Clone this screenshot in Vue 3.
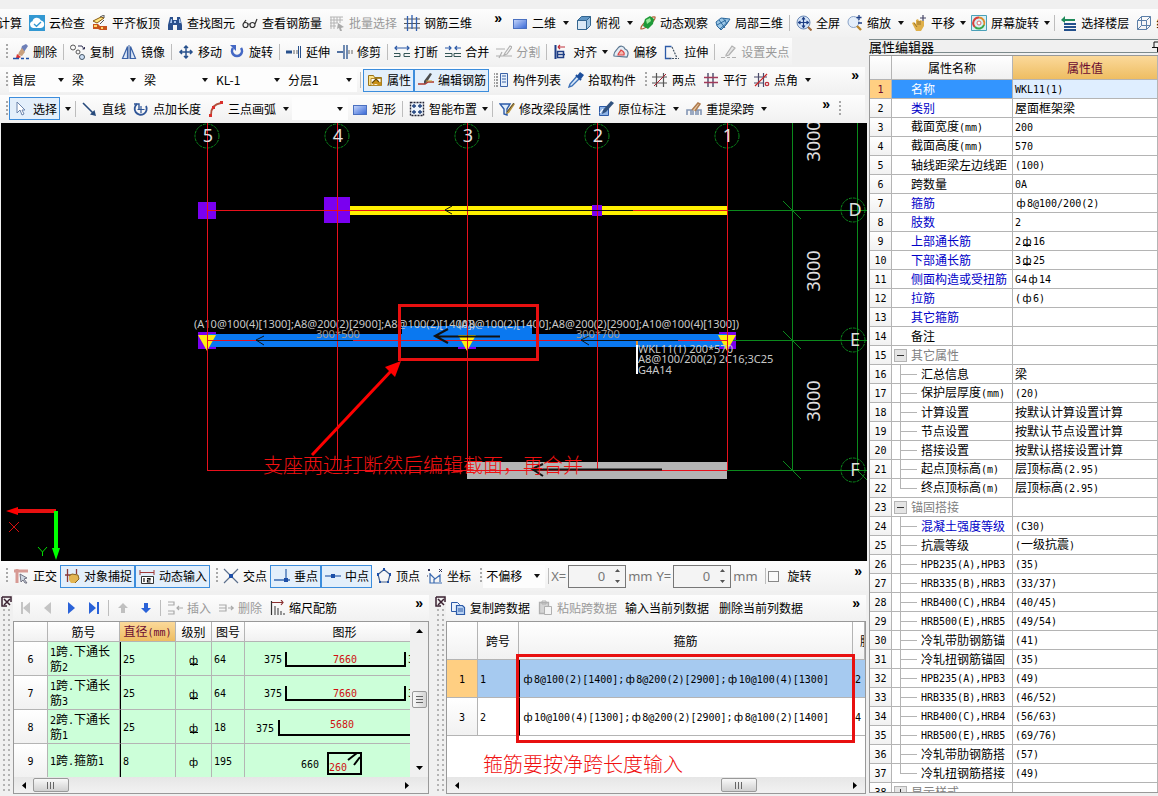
<script setup>
import { h } from 'vue'

const P = (d, s = '#2f5597', w = 1, f = 'none') => `<path d="${d}" stroke="${s}" stroke-width="${w}" fill="${f}"/>`
const F = (d, f = '#2f5597') => `<path d="${d}" fill="${f}"/>`
const dots = (s = '#c0303a') => `<circle cx="13" cy="12" r="1.7" fill="none" stroke="${s}" stroke-width="1.3"/>`

const icons = {
  cloud: F('M0 0h16v16H0z', '#3398d2') + F('M4 13a3.5 3.5 0 0 1-.5-6.8A4.5 4.5 0 0 1 12 5.5a3.8 3.8 0 0 1 0 7.5z', '#fff') + P('M5 9l2.5 2.3L12 7', '#3398d2', 1.3),
  slab: P('M1 6l8-4 3 1-7 5z', '#8a5a10', 1, '#ffe680') + F('M1 9h5l2 2h7v4H8l-2-1H1z', '#c8541c') + F('M2 10h3v2H2zM9 12h2v2H9z', '#ffd76a') + P('M8 2l4-2v3M12 5l-4 4', '#555'),
  binoc: F('M3 2h3v3h4V2h3l2 8v5h-5v-5H6v5H1v-5z', '#2a4f8c') + F('M4 4h1v4H3zM12 4h1l1 4h-2zM7 6h2v2H7z', '#a9c6ee'),
  glasses: P('M1 10a2.5 2.5 0 1 0 5 0a2.5 2.5 0 1 0-5 0M8 10a2.5 2.5 0 1 0 5 0a2.5 2.5 0 1 0-5 0M6 9h2M1 9l3-4M13 9l2-5', '#333', 1.2),
  batch: P('M1 2h13M1 5h13M1 8h8M1 11h6M2 2v12M5 2v12M8 2v6M11 2v6', '#b4b4b4') + F('M9 8l6 4-3 1 1 3-2 0-1-3-2 1z', '#aaa'),
  rebar3d: P('M0 4h16M0 8.5h16M0 13h16', '#555') + P('M3.5 1v15M8 0v14M12.5 2v14', '#2f5fb0', 1.3),
  rect2d: `<defs><linearGradient id="gr" x2="1" y2="1"><stop stop-color="#c9d8fb"/><stop offset="1" stop-color="#3566d6"/></linearGradient></defs><rect x="1.5" y="4.5" width="13" height="9" fill="url(#gr)" stroke="#4a70c0"/>`,
  cube: P('M1.5 5.5h9v9h-9z', '#33658f', 1, '#dbe9f5') + P('M1.5 5.5l4-4h9l-4 4z', '#33658f', 1, '#5f95c4') + P('M10.5 5.5l4-4v9l-4 4z', '#33658f', 1, '#9dc2e0'),
  orbit: P('M1 14C0 11 10 1 15 2C16 5 6 14 1 14z', '#b05a30', 1.2) + F('M5 4l5-3 4 3-1 5-5 5-5-3z', '#1f9a38') + F('M6 5l4-2 1 3-4 3z', '#9be89b'),
  local3d: P('M1 7l5-4 9 1-4 6-5 5-4-4z', '#2e6a9e', 1, '#9cc7e6') + P('M4 5l6 8M8 3l4 6M2 10l9-5M5 14l9-8', '#2e6a9e'),
  full: `<circle cx="7.5" cy="7.5" r="6.5" fill="#d5e4f7" stroke="#6b89b5"/>` + P('M7.5 3v9M3 7.5h9M6 4.5l1.5-2 1.5 2M6 10.5l1.5 2 1.5-2M4.5 6l-2 1.5 2 1.5M10.5 6l2 1.5-2 1.5', '#1e3f86', 1.2) + P('M12 12l3.5 3.5', '#a06a3c', 2),
  zoom: `<circle cx="6.5" cy="7" r="5.5" fill="#e4eefa" stroke="#8aa3c7"/>` + P('M10 11l4 4', '#b8862e', 2.4) + P('M12 0v5M9.5 2.5h5M11 8h4', '#1e3f86', 1.3),
  pan: F('M1 8l2-1 2 2V5l2-1 1 2 2-1 1 1 2 0v5l-3 5H5z', '#dfb04a') + P('M3 8l3 4M7 6v4M9 6v4', '#8a6420', 0.8) + P('M12 0v6M9 3h6', '#446', 1.2),
  rot: P('M.5.5h15v15h-15z', '#4aa0b8', 1, '#d7f0f4') + P('M4 12A5.5 5.5 0 0 1 8 2.5', '#d7403a', 2) + P('M8 2.5A5.5 5.5 0 0 1 13 10', '#e08a2c', 2) + P('M13 10A5.5 5.5 0 0 1 4 12', '#3aa648', 2) + `<circle cx="8" cy="8" r="2" fill="#fff" stroke="#d66"/>`,
  floors: F('M0 5l4-4v3h10v2H4v2z', '#1e8a5a') + F('M3 8h12v2H3zM3 11h12v2H3zM3 14h12v2H3z', '#23508c'),
  wire: P('M1.5 5.5h9v9h-9zM5.5 1.5h9v9h-9zM1.5 5.5l4-4M10.5 5.5l4-4M10.5 14.5l4-4M1.5 14.5l4-4', '#5c7fa8'),
  erase: F('M9 2l4-2 2 2-4 6-4 1z', '#6d7fb8') + F('M6 8l3-4 3 4-3 4-4-1z', '#c9a07c') + F('M4 10l4 3-2 1H3z', '#d33') + P('M0 14.5h6M8 14.5h3M13 14.5h3', '#1f4fa8', 1.4),
  copy: `<circle cx="3" cy="3.5" r="2.5" fill="none" stroke="#555"/><circle cx="8" cy="8" r="2" fill="none" stroke="#555"/><circle cx="12" cy="13" r="2.5" fill="#cfe0f5" stroke="#456"/>` + P('M8 2h4l2 3M12.5 5H14.5V3', '#335'),
  mirror: P('M1.5 14.5l5-12v12zM14.5 14.5l-5-12v12z', '#3b62a6', 1.2, '#dde8f7') + P('M8 1v14', '#3b62a6', 1),
  move: P('M8 2v12M2 8h12M6 4l2-2 2 2M6 12l2 2 2-2M4 6L2 8l2 2M12 6l2 2-2 2', '#27508c', 1.5),
  rotate: P('M4 4A5 5 0 1 0 12 4', '#4468c4', 2.6) + F('M1 1h6v6z', '#4468c4'),
  extend: P('M0 8h6', '#27508c', 3) + P('M7 7h5M7 9h5', '#666', 1).replace('/>', ' stroke-dasharray="2 1"/>') + P('M12.5 2v12M14.5 2v12', '#27508c', 1),
  trim: P('M0 8h6', '#27508c', 1.6) + P('M7 1v14M10 1v14', '#27508c', 1.3) + P('M11 7h2M14 7h2M11 9h2M14 9h2', '#666', 1),
  break: P('M1 4h14M3 2L1 4l2 2M13 2l2 2-2 2', '#2d5ba8', 1.2) + P('M0 9.5h6v3H0M16 9.5h-6v3h6', '#355', 1),
  merge: P('M0 4h6M10 4h6M4 2l2 2-2 2M12 2l-2 2 2 2', '#2d5ba8', 1.2) + P('M0 9.5h7v3H0M16 9.5H9v3h7', '#355', 1),
  split: P('M0 5h9M0 12h16M3 14l3-6M9 9l5-7 2 1-5 7-3 1z', '#b0b0b0', 1.2),
  align: P('M2.5 1v14', '#1f3f86', 2) + P('M5 3h7M5 3l2-2M5 3l2 2', '#c0303a', 1.2) + P('M4.5 7.5h6v6h-6zM4 10.5h8', '#1f3f86', 1.5),
  offset: P('M1 12C0 8 4 6 5 4C7 1 11 2 12 5C15 6 16 9 14 13z', '#5b7690', 1.2, '#e4edf5') + P('M5 11C5 9 7 8 8 6C10 7 12 8 11 11z', '#d44', 1.2, '#f5b9b0'),
  stretch: P('M7.5 2.5h-6v12h6', '#2d5ba8', 1.3) + P('M8 3l5 11M5 14.5h10', '#456', 1.2).replace('/>', ' stroke-dasharray="2 1"/>'),
  clamp: P('M0 13.5h4M6 13.5h3M11 13.5h4M5 11l6-9 3 2-6 7-3 1z', '#b0b0b0', 1.2, '#e6e6e6'),
  prop: P('M1.5 3.5h5l1 2h7v8h-13z', '#9a7418', 1, '#ffe48a') + F('M4 6h10v8H4z', '#fff') + P('M4 6.5h10v7H4z', '#b08a30') + F('M5 11l4-4 3 3 2 0v3h-3l-2-1-3 1z', '#c89018') + P('M5 11l4-4 3 3', '#6a4c08', 1.2),
  editbar: P('M0 12h7l3-2h6', '#b0382c', 1.5) + F('M6 9l6-8 2 1-5 8-3 2z', '#4c4c4c') + P('M8 9h6', '#c8a030', 1),
  list: P('M1 2h1M3 2h2M1 5h1M3 5h2M1 8h1M3 8h2M1 11h1M3 11h2M1 14h1M3 14h2', '#444', 1) + P('M7.5 1.5h7v13h-7z', '#3b62a6', 1, '#e6effa') + P('M9 4h4M9 7h4M9 10h4', '#3b62a6'),
  pick: F('M9 4l3-4 4 3-3 4z', '#1d4f9c') + P('M9 4l-7 8-1 3 3-1 7-7', '#3b6fb6', 1.4, '#d9e8f8') + P('M8 3l5 5', '#1d4f9c', 2),
  twopt: P('M4.5 1v14M11.5 1v14M0 5h15M0 11h15', '#555', 1.2) + P('M2 14L14 2', '#a23', 1),
  parallel: P('M5 1v14M10 1v14', '#4a4a6a', 1.4) + P('M1 5.5h14M1 10.5h14', '#a23a5a', 1.4),
  ptangle: P('M4.5 1v14M9.5 1v14M0 5h13M0 11h10', '#4a4a6a', 1.2) + P('M1 14L13 2', '#c22', 1.2) + dots(),
  select: P('M4 1l0 11 3-3 2 5 2-1-2-4 3 0z', '#6a84ac', 1, '#fff'),
  line: P('M1 2l11 11', '#274a7c', 1.6) + F('M14 15L8 13.5 12.5 9z', '#274a7c'),
  ptlen: P('M4 3A6 6 0 1 0 13 5', '#2f5597', 1.8) + P('M1 3h5v5', '#2f5597', 1.4) + P('M8 5v7M4.5 8.5h7', '#2f5597', 1.2),
  arc: P('M3 14C3 8 6 3 13 2', '#b0503c', 1.8) + F('M1 13h3v3H1zM4 5h3v3H4zM12 0h3v3h-3z', '#d9302c'),
  smart: P('M1.5 1.5h13v13h-13z', '#223', 1.4, '#eef4fb').replace('/>', ' stroke-dasharray="2 1"/>') + P('M5 3v4M3 5h4M11 3v4M9 5h4M5 9v4M3 11h4M11 9v4M9 11h4', '#1c3f7c', 1.3),
  modify: P('M1 3h10l-3 5v6l-3-1V8z', '#2d5ba8', 1.4, '#dcebfa') + F('M8 10l6-8 2 1-6 9-3 1z', '#b9943c') + P('M8 11l7-9', '#444', 0.9),
  annot: P('M1.5 5.5h9v9h-9z', '#2d5ba8', 1, '#8fb4e6') + F('M5 9l8-9 3 2-8 9-4 2z', '#31527f') + P('M2 12l3-4', '#fff', 1.2),
  respan: P('M1 14V9h4v5M7 14V9h3v5M12 14V9h3v5M1 9h14', '#8496b4', 1.6) + P('M6 9l6-7 2 1-5 7', '#b07c50', 1.5, '#e8cda8'),
  ortho: P('M1 3h14M4 1v14', '#d79a94', 3) + P('M7 6l7 4-3 1 3 4-2 0-2-3-2 2z', '#667', 0.9, '#cfd8e4'),
  osnap: P('M3.5 1v13M1 7h6M12.5 1v5', '#8a3a3a', 1.3) + F('M5 8l3-2 6 1 1 4-4 4H7l-2-3z', '#e3b552') + P('M5 8l3-2 6 1 1 4-4 4', '#8a6420'),
  dyn: P('M1 2v5M15 2v5M1 4.5h14', '#a03a3a', 1) + P('M2.5 8.5h12v7h-12z', '#333', 1, '#fff') + P('M5 10v4M8 10.5h3v1.5H8.5v2H11.5', '#111', 1.2),
  inter: P('M1 1l14 14M15 1L1 15', '#5c6f8c', 1.2) + F('M6 6h4v4H6z', '#1d4fa8'),
  perp: P('M0 12h16M12 1v11', '#3a6ab0', 1.3) + F('M10 10h4v4h-4z', '#1d4fa8'),
  mid: P('M0 8h16', '#3a6ab0', 1.3) + F('M6 6h4v4H6z', '#1d4fa8'),
  vertex: P('M8 1.5L14 6.5 12 14H4L2 6.5z', '#44618c', 1.2) + F('M7 0h2v3H7zM13 5h2v3h-2zM1 5h2v3H1zM3 13h2v2H3zM11 13h2v2h-2z', '#1d4fa8'),
  coord: P('M3 5v10h12M3 6l5 5 5-4v7M7 15v-4', '#3a6ab0', 1.2) + P('M1 1l2 2M3 1L1 3M12 1l3 3M15 1l-3 3M0 8h1', '#335', 1),
  first: F('M4 2h2v12H4zM13 2v12L6 8z', '#c4c4c4'),
  prev: F('M11 2v12L4 8z', '#c4c4c4'),
  next: F('M5 2v12l7-6z', '#2a62d8'),
  last: F('M3 2v12l7-6zM11 2h2v12h-2z', '#2a62d8'),
  up: F('M8 3l5 5h-3v5H6V8H3z', '#c0c0c0'),
  down: F('M8 13l5-5h-3V3H6v5H3z', '#2a62d8'),
  ins: P('M1 2h6v3H1M1 11h6v3H1M10 8h6M12 6l-2 2 2 2', '#aaa', 1.2),
  del: P('M1 5h7v6H1M1 8h7M10 8h6M13 6l2 2-2 2', '#aaa', 1.2),
  scale: P('M2.5 1v14', '#333', 1.2) + P('M3 2.5h11M12 0l2 2.5-2 2.500', '#8a3030', 1.2) + P('M6 15V6M9 15V8M12 15v-4M15 15v-2', '#555', 1.2),
  copydata: P('M1.5 2.5h6l2 2v7h-8z', '#2d5ba8', 1, '#eaf2fc') + P('M6.5 5.5h6l2 2v7h-8z', '#2d5ba8', 1.2, '#b9d2f2') + P('M8 9h5M8 11h5', '#2d5ba8'),
  paste: P('M2.5 2.5h9v11h-9z', '#b0b0b0', 1.3, '#d4d4d4') + P('M5 1h4v3H5z', '#b0b0b0', 1) + P('M7.5 6.5h7v8h-7z', '#b0b0b0', 1, '#f4f4f4')
}

const svg = (name) => h('svg', { class: 'ico', viewBox: '0 0 16 16', width: 16, height: 16, 'aria-hidden': true, innerHTML: icons[name] })
const caret = () => h('svg', { class: 'caret', viewBox: '0 0 12 6', width: 12, height: 6, 'aria-hidden': true, innerHTML: '<path d="M3 1h6L6 5z" fill="#111"/>' })

const Tools = (props) => props.items.map((it) => {
  if (it === '|') return h('i', { class: 'sep' })
  if (it === ':') return h('i', { class: 'grip' })
  if (it === '>>') return h('button', { class: 'more', type: 'button' }, '»')
  if (it.sel !== undefined) {
    return h('label', { class: ['combo', it.size] }, [
      h('select', { 'aria-label': it.name }, [h('option', it.sel)]),
      caret()
    ])
  }
  const cls = ['tb', { on: it.on, solo: it.solo, tight: it.tight, plain: !it.i && it.l && !it.solo }]
  return h('button', { class: cls, type: 'button', disabled: it.off, 'aria-label': it.l || it.name }, [
    it.i ? svg(it.i) : null,
    it.l ? h('span', it.l) : null,
    it.a && !it.on ? caret() : null
  ])
})
Tools.props = ['items']

const Mix = (props) => props.t.split(/([\x20-\x7e]+|[ф⏀])/).filter(Boolean).map((s) => {
  if (s === 'ф') return h('span', { class: 'phi' }, 'ф')
  if (s === '⏀') return h('span', { class: 'phi three' }, 'ф')
  return /^[\x20-\x7e]/.test(s) ? h('span', { class: 'mono' }, s) : s
})
Mix.props = ['t']

const b = (i, l, o = {}) => ({ i, l, ...o })
const arrow = { a: true }
const tight = { a: true, tight: true }
const off = { off: true }
const on = { on: true }

const top1 = [b('', '计算', { solo: true }), b('cloud', '云检查'), b('slab', '平齐板顶'), b('binoc', '查找图元'), b('glasses', '查看钢筋量'), b('batch', '批量选择', off), b('rebar3d', '钢筋三维'), '>>']
const top2 = [b('rect2d', '二维', arrow), b('cube', '俯视', arrow), b('orbit', '动态观察'), b('local3d', '局部三维'), '|', b('full', '全屏'), b('zoom', '缩放', arrow), b('pan', '平移', tight), b('rot', '屏幕旋转', tight), '|', b('floors', '选择楼层'), b('wire', '线框')]
const editBar = [':', b('erase', '删除'), '|', b('copy', '复制'), b('mirror', '镜像'), '|', b('move', '移动'), b('rotate', '旋转'), '|', b('extend', '延伸'), b('trim', '修剪'), '|', b('break', '打断'), b('merge', '合并'), b('split', '分割', off), '|', b('align', '对齐', tight), b('offset', '偏移'), b('stretch', '拉伸'), '|', b('clamp', '设置夹点', off)]
const memberBar = [':', { sel: '首层', name: '楼层', size: 'small' }, { sel: '梁', name: '构件类别' }, { sel: '梁', name: '构件类型' }, { sel: 'KL-1', name: '构件' }, { sel: '分层1', name: '分层' }, '|', b('prop', '属性', on), b('editbar', '编辑钢筋', on), b('list', '构件列表'), b('pick', '拾取构件'), ':', b('twopt', '两点'), b('parallel', '平行'), b('ptangle', '点角', arrow), '>>']
const drawBar = [':', b('select', '选择', on), { name: '选择方式', a: true }, '|', b('line', '直线'), b('ptlen', '点加长度'), b('arc', '三点画弧', arrow), { sel: '', name: '画弧方式', size: 'mid' }, b('rect2d', '矩形'), '|', b('smart', '智能布置', tight), '|', b('modify', '修改梁段属性'), b('annot', '原位标注', arrow), b('respan', '重提梁跨', arrow), '>>', ':']
const snapBar = [':', b('ortho', '正交'), b('osnap', '对象捕捉', on), b('dyn', '动态输入', on), ':', b('inter', '交点'), b('perp', '垂点', on), b('mid', '中点', on), b('vertex', '顶点'), b('coord', '坐标'), ':', { sel: '不偏移', name: '偏移方式', size: 'wide' }, '|']
const nav = (i, name, o = {}) => ({ i, name, ...o })
const barBar = [nav('first', '首行', off), nav('prev', '上一行', off), nav('next', '下一行'), nav('last', '末行'), '|', nav('up', '上移', off), nav('down', '下移'), '|', b('ins', '插入', off), b('del', '删除', off), b('scale', '缩尺配筋'), '>>']
const spanBar = [b('copydata', '复制跨数据'), b('paste', '粘贴跨数据', off), b('', '输入当前列数据'), b('', '删除当前列数据'), '>>']

// [name, value, kind]: s = selected, b = blue, g = group, c = child, e = last child, B = blue child
const props = [
  ['名称', 'WKL11(1)', 's'], ['类别', '屋面框架梁', 'b'], ['截面宽度(mm)', '200'], ['截面高度(mm)', '570'], ['轴线距梁左边线距', '(100)'],
  ['跨数量', '0A'], ['箍筋', 'ф8@100/200(2)', 'b'], ['肢数', '2', 'b'], ['上部通长筋', '2⏀16', 'b'], ['下部通长筋', '3⏀25', 'b'],
  ['侧面构造或受扭筋', 'G4ф14', 'b'], ['拉筋', '(ф6)', 'b'], ['其它箍筋', '', 'b'], ['备注', ''], ['其它属性', '', 'g'],
  ['汇总信息', '梁', 'c'], ['保护层厚度(mm)', '(20)', 'c'], ['计算设置', '按默认计算设置计算', 'c'], ['节点设置', '按默认节点设置计算', 'c'], ['搭接设置', '按默认搭接设置计算', 'c'],
  ['起点顶标高(m)', '层顶标高(2.95)', 'c'], ['终点顶标高(m)', '层顶标高(2.95)', 'e'], ['锚固搭接', '', 'g'], ['混凝土强度等级', '(C30)', 'B'], ['抗震等级', '(一级抗震)', 'c'],
  ['HPB235(A),HPB3', '(35)', 'c'], ['HRB335(B),HRB3', '(33/37)', 'c'], ['HRB400(C),HRB4', '(40/45)', 'c'], ['HRB500(E),HRB5', '(49/54)', 'c'], ['冷轧带肋钢筋锚', '(41)', 'c'],
  ['冷轧扭钢筋锚固', '(35)', 'c'], ['HPB235(A),HPB3', '(49)', 'c'], ['HRB335(B),HRB3', '(46/52)', 'c'], ['HRB400(C),HRB4', '(56/63)', 'c'], ['HRB500(E),HRB5', '(69/76)', 'c'],
  ['冷轧带肋钢筋搭', '(57)', 'c'], ['冷轧扭钢筋搭接', '(49)', 'e'], ['显示样式', '', 'g']
]
const kinds = { s: 'sel', b: 'blue', g: 'group', c: 'child', e: 'child end', B: 'child blue' }

const bars = [
  { n: 6, name: '1跨.下通长筋2', d: 25, g: '⏀', no: 64, path: 'M41 9v14h119V9', left: '375', lx: 19, ly: 20, mid: '7660', mx: 88, my: 20, tail: '375' },
  { n: 7, name: '1跨.下通长筋3', d: 25, g: '⏀', no: 64, path: 'M41 9v14h119V9', left: '375', lx: 19, ly: 20, mid: '7660', mx: 88, my: 20, tail: '375' },
  { n: 8, name: '2跨.下通长筋1', d: 25, g: '⏀', no: 18, path: 'M34 9v15h136', left: '375', lx: 11, ly: 21, mid: '5680', mx: 85, my: 17 },
  { n: 9, name: '1跨.箍筋1', d: 8, g: 'ф', no: 195, path: 'M83 8h33v21h-33zM103 15l9-7M109 20l6-8', left: '660', lx: 56, ly: 23, mid: '260', mx: 84, my: 26 }
]
const spans = [
  { n: 1, k: 1, v: 'ф8@100(2)[1400];ф8@200(2)[2900];ф10@100(4)[1300]', z: 2, cur: true },
  { n: 3, k: 2, v: 'ф10@100(4)[1300];ф8@200(2)[2900];ф8@100(2)[1400]', z: 4 }
]

const cols = [[207, 5], [337, 4], [467, 3], [597, 2], [727, 1]]
const rowsAxis = [[210, 'D'], [340, 'E'], [470, 'F']]
const columns = [[198, 202, 18, 17], [324, 197, 26, 26], [592, 205, 10, 11], [198, 332, 18, 17], [458, 332, 18, 17], [719, 332, 17, 17]]
</script>

<template>
  <div class="ui">
    <div class="topbar">
      <div class="bar first"><Tools :items="top1" /></div>
      <div class="bar second"><Tools :items="top2" /></div>
    </div>
    <div class="work">
      <main class="left">
        <div class="row"><div class="bar"><Tools :items="editBar" /></div></div>
        <div class="row"><div class="bar grow"><Tools :items="memberBar" /></div></div>
        <div class="row"><div class="bar grow draw"><Tools :items="drawBar" /></div></div>

        <svg class="canvas" role="img" aria-label="梁平面图">
          <g transform="translate(-1,-123)">
            <rect x="350" y="206" width="377" height="9" fill="#fff000" />
            <rect x="467" y="462" width="260" height="17" fill="#b4b4b4" />
            <rect v-for="(c, i) in columns" :key="i" :x="c[0]" :y="c[1]" :width="c[2]" :height="c[3]" fill="#7a00f0" />
            <path d="M207 334h195v-8h130v8h195v13H207z" fill="#0a78f0" />
            <rect x="727" y="332" width="9" height="17" fill="#7a00f0" />
            <rect x="198" y="332" width="9" height="17" fill="#7a00f0" />
            <g class="axis">
              <template v-for="r in rowsAxis" :key="r[1]">
                <path :d="`M727 ${r[0]}.5h140M783 ${r[0] - 9}l18 18`" />
                <circle :cx="853" :cy="r[0]" r="12" />
              </template>
              <path d="M792.5 123v347M857.5 123v347M857 470l10 10" />
              <circle v-for="c in cols" :key="c[1]" :cx="c[0]" cy="136" r="12" />
            </g>
            <path v-for="x in [207, 467, 727]" :key="x" :d="`M${x - 9} 335h18l-9 16z`" fill="#ffee10" />
            <g class="cad small">
              <text x="194" y="328">(A10@100(4)[1300];A8@200(2)[2900];A8@100(2)[1400])</text>
              <text x="739" y="328" text-anchor="end">(A8@100(2)[1400];A8@200(2)[2900];A10@100(4)[1300])</text>
              <text x="316" y="338" class="dim">300*500</text>
              <text x="576" y="338" class="dim">300*700</text>
              <text x="638" y="353">WKL11(1) 200*570</text>
              <text x="638" y="363">A8@100/200(2) 2C16;3C25</text>
              <text x="638" y="374">G4A14</text>
            </g>
            <path d="M637 345v29" stroke="#fff" stroke-width="2" />
            <path d="M637 341v4" stroke="#e09030" stroke-width="2" />
            <g class="red">
              <rect v-for="c in cols" :key="c[1]" :x="c[0]" y="123" width="1" height="347" />
              <rect v-for="r in rowsAxis" :key="r[1]" x="207" :y="r[0]" width="520" height="1" />
            </g>
            <g class="cad big">
              <text v-for="c in cols" :key="c[1]" :x="c[0] + 1" y="142" text-anchor="middle">{{ c[1] }}</text>
              <text v-for="r in rowsAxis" :key="r[1]" x="855" :y="r[0] + 6" text-anchor="middle">{{ r[1] }}</text>
              <text v-for="y in [141, 271, 401]" :key="y" :transform="`translate(820,${y}) rotate(-90)`" text-anchor="middle">3000</text>
            </g>
            <path d="M445 210.5h188M452 206l-7 4 7 4M256 340.5h97M264 336l-8 4 8 5M581 340.5h97M589 336l-8 4 8 5" stroke="#111" fill="none" />
            <path d="M435 336.5h65M448 329l-13 7 13 7M532 469.5h130M543 464l-11 5 11 7" stroke="#111" stroke-width="2" fill="none" />
            <rect x="399.5" y="305.5" width="138" height="54" fill="none" stroke="#e81010" stroke-width="3" />
            <path d="M312 455l80-85" stroke="#f00" stroke-width="3" />
            <path d="M401 361l-6 16-10-10z" fill="#f00" />
            <text x="263" y="473" class="note">支座两边打断然后编辑截面，再合并</text>
            <path d="M56 511H18" stroke="#e81010" stroke-width="4" />
            <path d="M6 511l12-4v8z" fill="#f00" />
            <path d="M56 511v40" stroke="#0f0" stroke-width="4" />
            <path d="M56 560l-4-12h8z" fill="#0f0" />
            <path d="M9 522l10 10M19 522l-10 10" stroke="#d01010" />
            <path d="M38 547l4.5 5 4.5-5M42.5 552v4" stroke="#0d0" fill="none" />
          </g>
        </svg>

        <div class="bar snap">
          <Tools :items="snapBar" />
          <label class="num"><span>X=</span><span class="spin"><input type="text" value="0" disabled /><svg width="9" height="18" viewBox="0 0 9 18"><path d="M2 5l2.5-3L7 5zM2 13l2.5 3L7 13z" fill="#555" /></svg></span><span>mm</span></label>
          <label class="num"><span>Y=</span><span class="spin"><input type="text" value="0" disabled /><svg width="9" height="18" viewBox="0 0 9 18"><path d="M2 5l2.5-3L7 5zM2 13l2.5 3L7 13z" fill="#555" /></svg></span><span>mm</span></label>
          <Tools :items="['|']" />
          <label class="chk"><input type="checkbox" /><span>旋转</span></label>
          <Tools :items="['>>']" />
        </div>

        <div class="docks">
          <section class="dock wide">
            <div class="handle"><button type="button" class="shut" aria-label="关闭"><svg width="11" height="11" viewBox="0 0 11 11"><path d="M1 1h9v5M1 1v9h5" stroke="#3a2030" fill="none" stroke-width="1.5" /><path d="M3 3l6 6M9 3L3 9" stroke="#3a2030" stroke-width="1.5" /></svg></button></div>
            <div class="body">
              <div class="bar"><Tools :items="barBar" /></div>
              <div class="sheet">
                <div class="view">
                  <table class="bars">
                    <colgroup><col class="c34" /><col class="c72" /><col class="c56" /><col class="c36" /><col class="c33" /><col /></colgroup>
                    <thead><tr><th></th><th>筋号</th><th class="hot"><Mix t="直径(mm)" /></th><th>级别</th><th>图号</th><th class="pic">图形</th></tr></thead>
                    <tbody>
                      <tr v-for="r in bars" :key="r.n">
                        <th><Mix :t="String(r.n)" /></th>
                        <td class="nm"><Mix :t="r.name" /></td>
                        <td class="cur"><Mix :t="String(r.d)" /></td>
                        <td class="mid"><Mix :t="r.g" /></td>
                        <td><Mix :t="String(r.no)" /></td>
                        <td class="shape">
                          <svg width="100%" height="32">
                            <path :d="r.path" fill="none" stroke="#000" stroke-width="2" />
                            <text :x="r.lx" :y="r.ly">{{ r.left }}</text>
                            <text :x="r.mx" :y="r.my" class="len">{{ r.mid }}</text>
                            <text v-if="r.tail" x="163" :y="r.ly">{{ r.tail }}</text>
                          </svg>
                        </td>
                      </tr>
                    </tbody>
                  </table>
                </div>
                <div class="vscroll">
                  <button type="button" aria-label="向上"><svg width="7" height="4"><path d="M0 4l3.5-4L7 4z" /></svg></button>
                  <i class="thumb v"></i>
                  <button type="button" aria-label="向下"><svg width="7" height="4"><path d="M0 0l3.5 4L7 0z" /></svg></button>
                </div>
                <div class="hscroll">
                  <button type="button" aria-label="向左"><svg width="4" height="7"><path d="M4 0L0 3.5 4 7z" /></svg></button>
                  <i class="thumb h"></i><span class="fill"></span>
                  <button type="button" aria-label="向右"><svg width="4" height="7"><path d="M0 0l4 3.5L0 7z" /></svg></button>
                  <i class="corner"></i>
                </div>
              </div>
            </div>
          </section>
          <section class="dock">
            <div class="handle"><button type="button" class="shut" aria-label="关闭"><svg width="11" height="11" viewBox="0 0 11 11"><path d="M1 1h9v5M1 1v9h5" stroke="#3a2030" fill="none" stroke-width="1.5" /><path d="M3 3l6 6M9 3L3 9" stroke="#3a2030" stroke-width="1.5" /></svg></button></div>
            <div class="body">
              <div class="bar"><Tools :items="spanBar" /></div>
              <div class="sheet single">
                <div class="view white">
                  <table class="spans">
                    <colgroup><col class="c31" /><col class="c41" /><col /><col class="c12" /></colgroup>
                    <thead><tr><th></th><th>跨号</th><th>箍筋</th><th class="cut">肢数</th></tr></thead>
                    <tbody>
                      <tr v-for="r in spans" :key="r.n" :class="{ cur: r.cur }">
                        <th><Mix :t="String(r.n)" /></th>
                        <td><Mix :t="String(r.k)" /></td>
                        <td class="edge"><Mix :t="r.v" /></td>
                        <td><Mix :t="String(r.z)" /></td>
                      </tr>
                    </tbody>
                  </table>
                  <div class="frame"></div>
                  <p class="remark">箍筋要按净跨长度输入</p>
                </div>
                <div class="hscroll">
                  <button type="button" aria-label="向左"><svg width="4" height="7"><path d="M4 0L0 3.5 4 7z" /></svg></button>
                  <span class="fill"></span><i class="thumb h"></i><span class="rest"></span>
                  <button type="button" aria-label="向右"><svg width="4" height="7"><path d="M0 0l4 3.5L0 7z" /></svg></button>
                </div>
              </div>
            </div>
          </section>
        </div>
      </main>

      <aside class="panel">
        <header><h2>属性编辑器</h2><svg width="6" height="12" viewBox="0 0 6 12"><path d="M6 2H2v5M0 7.5h6M5.5 7v5" stroke="#111" fill="none" /></svg></header>
        <div class="scroller">
          <table class="props">
            <colgroup><col class="c21" /><col class="c121" /><col /></colgroup>
            <thead><tr><th></th><th>属性名称</th><th class="hot">属性值</th></tr></thead>
            <tbody>
              <tr v-for="(p, i) in props" :key="i" :class="kinds[p[2]]">
                <th><Mix :t="String(i + 1)" /></th>
                <td class="name"><button v-if="p[2] === 'g'" type="button" class="fold" :class="{ plus: i === 37 }" :aria-label="p[0]"></button><Mix :t="p[0]" /></td>
                <td><Mix :t="p[1]" /></td>
              </tr>
            </tbody>
          </table>
        </div>
      </aside>
    </div>
  </div>
</template>

<style>
body { background: #f0f0f0; }
</style>

<style scoped>
.ui {
  height: 100vh;
  display: flex;
  flex-direction: column;
  overflow: hidden;
  box-sizing: border-box;
  padding-top: 9px;
  background: #f0f0f0;
  color: #000;
  font: 12px/14px "Noto Sans CJK SC", sans-serif;
}
.ui :deep(button), .ui :deep(select), .ui :deep(input) { font: inherit; color: inherit; }
.ui :deep(button) { border: 0; padding: 0; background: none; }
.topbar { display: flex; height: 28px; flex: none; }
.bar {
  display: flex;
  align-items: center;
  white-space: nowrap;
  background: linear-gradient(#fdfdfd, #f1f1f1);
}
.first { width: 508px; }
.second { flex: 1; min-width: 0; overflow: hidden; }
.bar :deep(.tb) {
  display: flex;
  align-items: center;
  flex: none;
  gap: 4px;
  height: 23px;
  box-sizing: border-box;
  padding: 0 3px 0 4px;
}
.bar :deep(.tb:has(.caret)) { padding-right: 0; }
.bar :deep(.tb.tight) { gap: 2px; }
.bar :deep(.tb.tight .ico) { margin-right: 2px; }
.bar :deep(.tb.tight .caret) { margin-right: -2px; }
.bar :deep(.tb .caret:first-child) { margin: 0 -2px; }
.bar :deep(.tb.plain) { padding: 0 5px; }
.bar :deep(.tb.solo) { width: 25px; overflow: hidden; justify-content: flex-end; padding-left: 0; }
.bar :deep(.tb:disabled) { color: #9a9a9a; }
.bar :deep(.tb.on) { border: 1px solid #3c8ddc; background: #e3effb; padding: 0 2px 0 3px; }
.bar :deep(.ico) { flex: none; display: block; }
.bar :deep(.sep) { flex: none; width: 1px; height: 16px; background: #bdbdbd; margin: 0 2px 0 3px; }
.bar :deep(.grip) {
  flex: none;
  width: 2px;
  height: 16px;
  margin: 0 1px 0 6px;
  background: repeating-linear-gradient(#a8a8a8 0 2px, transparent 2px 4px);
}
.bar :deep(.more) { margin-left: auto; padding: 0 6px 10px 0; font: bold 14px/14px "Liberation Sans", sans-serif; }
.bar :deep(.combo) { position: relative; display: flex; align-items: center; width: 72px; height: 23px; background: #fdfdfd; flex: none; }
.bar :deep(.combo.small) { width: 60px; }
.bar :deep(.combo.mid) { width: 56px; }
.bar :deep(.combo.wide) { width: 62px; }
.bar :deep(.combo select) { appearance: none; width: 100%; height: 100%; border: 0; padding: 0 0 0 3px; background: none; }
.bar :deep(.combo .caret) { position: absolute; right: 2px; }
.work { flex: 1; min-height: 0; display: grid; grid-template-columns: minmax(0, 1fr) 290px; grid-template-rows: minmax(0, 1fr); }
.left { display: flex; flex-direction: column; min-width: 0; min-height: 0; }
.row { display: flex; flex: none; height: 29px; padding: 1px 3px 1px 0; box-sizing: border-box; }
.row:nth-child(2) { height: 28px; }
.row .grow { flex: 1; min-width: 0; }
.draw :deep(.grip:last-child) { margin: 0 24px 0 3px; }
.canvas { flex: 1; min-height: 0; width: calc(100% - 2px); margin-left: 1px; background: #000; display: block; }
.axis { stroke: #0b8a1c; fill: none; }
.axis circle { stroke-dasharray: 3 1; }
.red { fill: #e8101c; }
.cad { font-family: "Noto Sans", sans-serif; fill: #e0e0e0; }
.big { font-size: 18px; }
.small { font-size: 11px; fill: #c8c8c8; }
.small .dim { fill: #a09890; }
.note { font: 300 20px "Noto Sans CJK SC", sans-serif; fill: #f01010; }
.snap { height: 30px; flex: none; }
.num { display: flex; align-items: center; gap: 2px; color: #777; padding: 0 4px 0 0; font: 13px/16px "Noto Sans", sans-serif; }
.spin { display: flex; align-items: center; width: 58px; height: 23px; box-sizing: border-box; border: 1px solid #777; background: #f4f4f4; padding-right: 3px; }
.spin input { flex: 1; min-width: 0; border: 0; padding: 0 8px 0 0; background: none; text-align: right; }
.chk { display: flex; align-items: center; gap: 9px; }
.chk input { appearance: none; width: 11px; height: 11px; margin: 0; border: 1px solid #888; background: #fafafa; }
.docks { flex: none; height: 205px; display: grid; grid-template: minmax(0, 1fr) / 1fr 1fr; }
.dock { display: grid; grid-template: minmax(0, 1fr) / 12px minmax(0, 1fr); padding: 4px 2px 2px 0; min-width: 0; }
.dock.wide { padding-right: 5px; grid-template-columns: 13px minmax(0, 1fr); }
.handle { background: radial-gradient(circle at 1px 1px, #b4b4b4 1px, transparent 1px) 3px 14px / 5px 5px; }
.handle .shut { display: block; width: 12px; height: 14px; background: #f0f0f0; }
.body { display: flex; flex-direction: column; min-width: 0; min-height: 0; }
.body .bar { height: 26px; flex: none; }
.sheet {
  flex: 1;
  min-height: 0;
  display: grid;
  grid-template-columns: minmax(0, 1fr) 18px;
  grid-template-rows: minmax(0, 1fr) 16px;
  border: 1px solid #999;
  background: #f0f0f0;
}
.sheet.single { grid-template-columns: minmax(0, 1fr); }
.view { overflow: hidden; position: relative; }
.white { background: #fff; }
table { border-collapse: separate; border-spacing: 0; table-layout: fixed; width: 100%; }
th, td { box-sizing: border-box; padding: 0; border-right: 1px solid #b4b4b4; border-bottom: 1px solid #b4b4b4; font-weight: 400; white-space: nowrap; overflow: hidden; }
th { background: linear-gradient(#fff, #f1f1f1); text-align: center; }
.c34 { width: 34px; }
.c72 { width: 72px; }
.c56 { width: 56px; }
.c36 { width: 36px; }
.c33 { width: 33px; }
.c31 { width: 31px; }
.c41 { width: 41px; }
.c12 { width: 12px; }
.c21 { width: 22px; }
.c121 { width: 121px; }
.hot { background: linear-gradient(#fbd99a, #eebd62); color: #6a0a30; }
.ui :deep(.mono) { font-family: "DejaVu Sans Mono", monospace; font-size: 10px; }
.ui :deep(.phi) { display: inline-block; position: relative; width: 12px; text-align: center; font: 11px/12px "Liberation Sans", sans-serif; }
.ui :deep(.three::after) { content: ""; position: absolute; left: 2px; right: 2px; bottom: 1px; height: 1px; background: currentColor; }
.bars thead th { height: 20px; }
.bars tbody th, .bars td { height: 34px; }
.bars td { background: #ccffd9; padding-left: 2px; }
.bars .nm { white-space: normal; line-height: 13px; word-break: break-all; }
.bars .cur { border-left: 1px solid #000; }
.bars .mid { text-align: center; padding: 0; }
.bars .shape { padding: 0; border-right: 0; }
.bars .pic { border-right: 0; padding-left: 34px; }
.shape svg { display: block; overflow: hidden; }
.shape text { font: 10px "DejaVu Sans Mono", monospace; }
.shape .len { fill: #d01010; }
.vscroll { display: flex; flex-direction: column; align-items: center; justify-content: space-between; padding: 7px 0; }
.hscroll { grid-column: 1 / -1; display: flex; align-items: center; padding: 0 8px; gap: 7px; background: linear-gradient(#e6e6e6, #f2f2f2); }
.vscroll button, .hscroll button { display: flex; }
.thumb { border: 1px solid #999; border-radius: 2px; box-sizing: border-box; flex: none; }
.thumb.v { width: 15px; height: 17px; background: repeating-linear-gradient(#666 0 1px, transparent 1px 3px) center / 7px 8px no-repeat, linear-gradient(90deg, #f8f8f8, #d4d4d4); }
.thumb.h { width: 36px; height: 14px; background: repeating-linear-gradient(90deg, #666 0 1px, transparent 1px 3px) center / 8px 7px no-repeat, linear-gradient(#f8f8f8, #d0d0d0); }
.fill { flex: 1; }
.rest { width: 82px; }
.corner { width: 4px; }
.spans thead th { height: 38px; }
.spans tbody th, .spans td { height: 38px; }
.spans td { padding-left: 2px; border-right: 0; }
.spans .edge { border-left: 1px solid #000; }
.spans .cut { text-align: left; padding-left: 7px; }
.spans .cur td { background: #a6caf0; }
.spans .cur th { background: #ffcf82; }
.frame { position: absolute; left: 69px; right: 10px; top: 32px; height: 89px; box-sizing: border-box; border: 3px solid #e81010; }
.remark { margin: 8px 0 0 36px; font-size: 20px; line-height: 40px; font-weight: 300; color: #f01010; }
.panel { display: flex; flex-direction: column; min-width: 0; min-height: 0; padding: 2px 0 3px 1px; }
.panel header { display: flex; justify-content: space-between; align-items: center; height: 14px; box-sizing: border-box; border: solid #7c8a8c; border-width: 1px 0; margin-bottom: 2px; }
.panel h2 { margin: 0; font-size: 13px; line-height: 13px; font-weight: 400; }
.scroller { flex: 1; min-height: 0; overflow: hidden; border: 1px solid #999; border-right: 0; background: #fff; }
.props thead th { height: 24px; }
.props tbody th, .props td { height: 19px; }
.props td { padding-left: 2px; }
.props td.name { padding-left: 19px; position: relative; }
.props tr.sel .name { background: #3395ff; color: #fff; }
.props tr.sel td:last-child { background: #dfeeff; }
.props tr.sel th { background: #ffcf82; color: #6a0a30; }
.props .blue .name { color: #0000c8; }
.props .group .name { color: #808080; }
.props .child .name { padding-left: 29px; }
.props .child .name::before { content: ""; position: absolute; left: 8px; top: -1px; height: 20px; border-left: 1px solid #b4b4b4; }
.props .child .name::after { content: ""; position: absolute; left: 8px; top: 9px; width: 17px; border-top: 1px solid #b4b4b4; }
.props .end .name::before { height: 10px; }
.name .fold { position: absolute; left: 2px; top: 3px; width: 13px; height: 13px; border: 1px solid #b4b4b4; background: linear-gradient(#333, #333) center / 7px 1px no-repeat, #e4e4e4; }
.name .fold.plus { background: linear-gradient(#333, #333) center / 7px 1px no-repeat, linear-gradient(#333, #333) center / 1px 7px no-repeat, #e4e4e4; }
</style>
